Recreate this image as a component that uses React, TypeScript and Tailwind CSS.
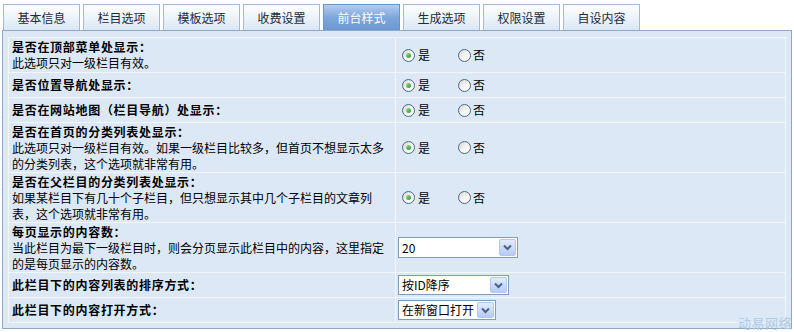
import React from "react";

const tabs = ["基本信息", "栏目选项", "模板选项", "收费设置", "前台样式", "生成选项", "权限设置", "自设内容"];

function Radio({ checked }: { checked?: boolean }) {
  return (
    <span className="relative inline-flex w-[13px] h-[13px] rounded-full border border-[#47698f] bg-gradient-to-br from-[#d6d6d0] via-[#f4f4f0] to-white items-center justify-center">
      {checked && (
        <span className="w-[5px] h-[5px] rounded-full bg-gradient-to-br from-[#8fe08f] to-[#1e9a1e]" />
      )}
    </span>
  );
}

function YesNo() {
  return (
    <div className="flex items-center pl-[4px]">
      <Radio checked />
      <span className="ml-[3px] w-[12px]">是</span>
      <span className="ml-[28px] flex items-center">
        <Radio />
        <span className="ml-[2px]">否</span>
      </span>
    </div>
  );
}

function Select({ value, w, h = 20 }: { value: string; w: string; h?: number }) {
  return (
    <div className={`flex items-stretch bg-white border border-[#7f9db9] ${w} ${h === 21 ? "h-[21px]" : "h-[20px]"}`}>
      <div className="flex-1 flex items-center pl-[3px] text-[12px] text-black leading-none">{value}</div>
      <div className="w-[17px] m-[1px] rounded-[2px] border border-[#b3c8f0] bg-gradient-to-b from-[#e3ecfe] to-[#b4cbf8] flex items-center justify-center">
        <svg width="9" height="7" viewBox="0 0 9 7">
          <path d="M1 1.5 L4.5 5 L8 1.5" fill="none" stroke="#4d6185" strokeWidth="2" />
        </svg>
      </div>
    </div>
  );
}

type Row = { title: string; desc?: string; h: string; right: React.ReactNode };

const rows: Row[] = [
  { title: "是否在顶部菜单处显示：", desc: "此选项只对一级栏目有效。", h: "h-[35px]", right: <YesNo /> },
  { title: "是否位置导航处显示：", h: "h-[25px]", right: <YesNo /> },
  { title: "是否在网站地图（栏目导航）处显示：", h: "h-[25px]", right: <YesNo /> },
  {
    title: "是否在首页的分类列表处显示：",
    desc: "此选项只对一级栏目有效。如果一级栏目比较多，但首页不想显示太多的分类列表，这个选项就非常有用。",
    h: "h-[50px]",
    right: <YesNo />,
  },
  {
    title: "是否在父栏目的分类列表处显示：",
    desc: "如果某栏目下有几十个子栏目，但只想显示其中几个子栏目的文章列表，这个选项就非常有用。",
    h: "h-[50px]",
    right: <YesNo />,
  },
  {
    title: "每页显示的内容数：",
    desc: "当此栏目为最下一级栏目时，则会分页显示此栏目中的内容，这里指定的是每页显示的内容数。",
    h: "h-[50px]",
    right: <Select value="20" w="w-[120px]" h={21} />,
  },
  { title: "此栏目下的内容列表的排序方式：", h: "h-[25px]", right: <Select value="按ID降序" w="w-[111px]" /> },
  { title: "此栏目下的内容打开方式：", h: "h-[25px]", right: <Select value="在新窗口打开" w="w-[98px]" /> },
];

export default function App() {
  return (
    <div className="relative w-[794px] h-[332px] bg-white font-['Noto_Sans_CJK_SC',sans-serif] text-[12px] text-black overflow-hidden">
      <div className="flex gap-[3px] pl-[3px] pt-[4px] h-[30px]">
        {tabs.map((t) =>
          t === "前台样式" ? (
            <div
              key={t}
              className="w-[77px] h-[26px] border border-[#6b93c6] border-b-0 bg-gradient-to-b from-[#b3cdef] via-[#7ea6dc] to-[#6d98d4] text-white flex items-center justify-center text-[12px]"
            >
              {t}
            </div>
          ) : (
            <div
              key={t}
              className="w-[77px] h-[26px] border border-[#a4b9d3] border-b-0 bg-gradient-to-b from-white to-[#dae7f5] text-[#1b2a3c] flex items-center justify-center text-[12px]"
            >
              {t}
            </div>
          )
        )}
      </div>
      <div className="ml-[2px] w-[790px] h-[299px] border border-[#8ea8c8] bg-[#dce8f5] pt-[6px] pl-[5px] pr-[5px] pb-[5px]">
        <div className="border-t border-l border-r border-[#f2f7fc]">
          {rows.map((r, i) => (
            <div key={i} className={`flex border-b border-[#f2f7fc] ${r.h}`}>
              <div className="w-[387px] border-r border-[#f2f7fc] flex flex-col justify-center pl-[3px] pr-[4px] leading-[16px]">
                <div className="font-bold tracking-[0.7px]">{r.title}</div>
                {r.desc && <div>{r.desc}</div>}
              </div>
              <div className="flex-1 flex items-center pl-[2px]">{r.right}</div>
            </div>
          ))}
        </div>
      </div>
      <div className="absolute right-[2px] bottom-[2px] text-[13px] text-[#b1cbe3] tracking-[0.5px] leading-[15px]">动易网络</div>
    </div>
  );
}
